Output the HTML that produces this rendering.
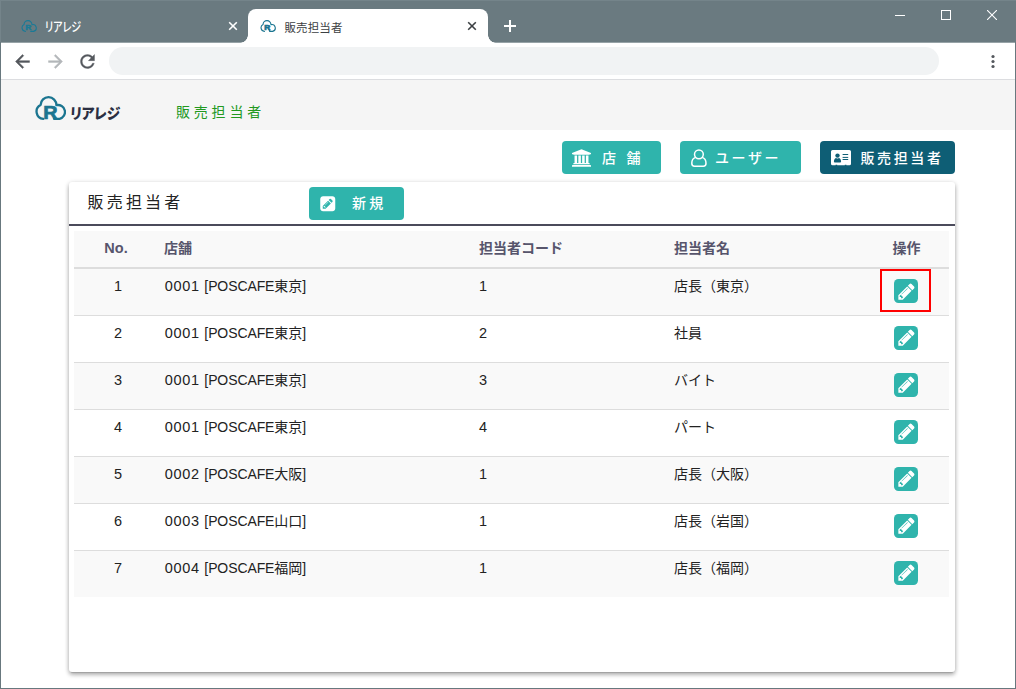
<!DOCTYPE html>
<html lang="ja">
<head>
<meta charset="utf-8">
<title>販売担当者</title>
<style>
*{box-sizing:border-box;margin:0;padding:0}
html,body{width:1016px;height:689px;overflow:hidden;background:#fff}
body{font-family:"Liberation Sans","Noto Sans CJK JP",sans-serif;color:#333;position:relative}
.abs{position:absolute}
#win{position:absolute;left:0;top:0;width:1016px;height:689px;overflow:hidden}
#frame{position:absolute;left:0;top:0;width:1016px;height:689px;border-left:1px solid #68787e;border-right:1px solid #68787e;border-bottom:1px solid #68787e;pointer-events:none}
#titlebar{position:absolute;left:0;top:0;width:1016px;height:42px;background:#6a7a80;z-index:3}
#titlebar svg,#titlebar .tabtxt{z-index:4}
#tab-active{position:absolute;left:248px;top:9px;width:240px;height:34px;z-index:2;background:#fff;border-radius:8px 8px 0 0}
#tab-active:before,#tab-active:after{content:"";position:absolute;bottom:0;width:8px;height:8px;background:radial-gradient(circle at 0 0,rgba(255,255,255,0) 7.5px,#fff 8px)}
#tab-active:before{left:-8px}
#tab-active:after{right:-8px;background:radial-gradient(circle at 100% 0,rgba(255,255,255,0) 7.5px,#fff 8px)}
.tabtxt{position:absolute;font-size:12px;line-height:16px;white-space:nowrap;font-feature-settings:"palt"}
#toolbar{position:absolute;left:0;top:42px;width:1016px;height:38px;border-top:1px solid #97a3a7;background:#fff;border-bottom:1px solid #dcdde0}
#omni{position:absolute;left:109px;top:4px;width:830px;height:28px;border-radius:14px;background:#f1f3f4}
#logotxt{position:absolute;left:70px;top:23px;font-family:"Noto Sans CJK JP",sans-serif;font-weight:900;font-size:15px;line-height:20px;color:#2b2f42;white-space:nowrap;transform-origin:0 50%;transform:skewX(-3deg) scaleX(.9);font-feature-settings:"palt"}
#pagehead{position:absolute;left:0;top:80px;width:1016px;height:50px;background:#f5f5f5}
#pagetitle{position:absolute;left:176px;top:103px;font-size:14px;line-height:18px;letter-spacing:3.8px;color:#22991f;white-space:nowrap}
.btn{position:absolute;top:141px;height:33px;border-radius:4px;background:#2fb4ac;color:#fff;font-size:14px;font-weight:500;line-height:34px;white-space:nowrap}
#card{position:absolute;left:69px;top:182px;width:886px;height:490px;background:#fff;border-radius:3px;box-shadow:0 3px 4px 0 rgba(0,0,0,.22),0 3px 1px -2px rgba(0,0,0,.12),0 1px 5px 0 rgba(0,0,0,.2)}
#cardtitle{position:absolute;left:18.5px;top:10px;font-size:16px;line-height:22px;letter-spacing:3.2px;color:#222;white-space:nowrap}
#cardline{position:absolute;left:0;top:42px;width:886px;height:2px;background:#4b4b5b}
#newbtn{position:absolute;left:240px;top:5px;width:95px;height:33px;border-radius:4px;background:#2fb4ac;color:#fff;font-size:14px;font-weight:500;line-height:33px;white-space:nowrap}
table{position:absolute;left:5px;top:49px;width:875px;border-collapse:collapse;font-size:14px;color:#222}
th{height:37px;background:#f9f9f9;border-bottom:2px solid #ddd;font-weight:bold;color:#57556c;text-align:left;padding:7px 0 0 0;vertical-align:top;line-height:20px}
td{height:47px;border-top:1px solid #ddd;padding:7px 0 0 0;vertical-align:top;line-height:20px}
tr.odd td{background:#f9f9f9}
.la{font-size:14px;letter-spacing:-.1px}
.dg{font-size:14.5px;letter-spacing:.65px;margin-left:.8px}
td.c1,td.c3{font-size:14.5px}
td.c1{padding-left:4px}
th.c1{font-size:14.5px}
.c1{width:90px;text-align:center !important;padding-right:6px !important}
.c2{width:315px}
.c3{width:195px}
.c4{width:206px}
.c5{text-align:left !important}
th.c5{padding-left:12.5px}
.eb{display:block;width:24px;height:24px;border-radius:4.5px;background:#2fb4ac;position:relative;top:3px;left:14px}
.eb svg{position:absolute;left:2.5px;top:2.5px}
</style>
</head>
<body>
<div id="win">
<div id="titlebar">
  <svg class="abs" style="left:21px;top:20px" width="16" height="12" viewBox="0 0 31 24"><path fill="none" stroke-linecap="round" stroke-linejoin="round" d="M8.3 22.8A7.3 7.3 0 0 1 5.6 9A7.7 7.7 0 0 1 21.4 9.2A6 6 0 0 1 24.6 22.8H19" stroke="#1a7a96" stroke-width="2.2"/><text transform="translate(7.8 19.2) scale(1.25 1)" font-family="Liberation Sans, sans-serif" font-weight="bold" font-size="13.5" fill="#1a7a96" stroke="#1a7a96" stroke-width=".9">R</text></svg>
  <div class="tabtxt" style="left:45px;top:18.5px;color:#fff;font-size:13px;font-weight:500;transform-origin:0 50%;transform:scaleX(.77)">リアレジ</div>
  <svg class="abs" style="left:228px;top:21px" width="10" height="10" viewBox="0 0 10 10"><path d="M1.2 1.2 8.8 8.8M8.8 1.2 1.2 8.8" stroke="#fff" stroke-width="1.6" fill="none"/></svg>
  <div id="tab-active"></div>
  <svg class="abs" style="left:260px;top:20px" width="16" height="12" viewBox="0 0 31 24"><path fill="none" stroke-linecap="round" stroke-linejoin="round" d="M8.3 22.8A7.3 7.3 0 0 1 5.6 9A7.7 7.7 0 0 1 21.4 9.2A6 6 0 0 1 24.6 22.8H19" stroke="#1b7590" stroke-width="2.2"/><path d="M19.5 22.8L17 18.5" stroke="#1b7590" stroke-width="2.4" fill="none"/><text transform="translate(7.8 19.2) scale(1.25 1)" font-family="Liberation Sans, sans-serif" font-weight="bold" font-size="13.5" fill="#1b7590" stroke="#1b7590" stroke-width="1.2">R</text></svg>
  <div class="tabtxt" style="left:284.5px;top:19.5px;color:#3c4043;font-size:11.5px;letter-spacing:.1px;font-feature-settings:normal">販売担当者</div>
  <svg class="abs" style="left:467px;top:21px" width="10" height="10" viewBox="0 0 10 10"><path d="M1.2 1.2 8.8 8.8M8.8 1.2 1.2 8.8" stroke="#3c4043" stroke-width="1.6" fill="none"/></svg>
  <svg class="abs" style="left:503px;top:19px" width="14" height="14" viewBox="0 0 14 14"><path d="M7 1V13M1 7H13" stroke="#fff" stroke-width="2" fill="none"/></svg>
  <div class="abs" style="left:895px;top:15px;width:10px;height:1px;background:#fff"></div>
  <div class="abs" style="left:941px;top:10px;width:10px;height:10px;border:1px solid #fff"></div>
  <svg class="abs" style="left:987px;top:10px" width="10" height="10" viewBox="0 0 10 10"><path d="M0 0 10 10M10 0 0 10" stroke="#fff" stroke-width="1.1" fill="none"/></svg>
</div>
<div id="toolbar">
  <svg class="abs" style="left:12px;top:7.5px" width="21" height="21" viewBox="0 0 24 24"><path fill="#54585d" stroke="#54585d" stroke-width=".5" d="M20 11H7.83l5.59-5.59L12 4l-8 8 8 8 1.41-1.41L7.83 13H20v-2z"/></svg>
  <svg class="abs" style="left:44.7px;top:7.5px" width="21" height="21" viewBox="0 0 24 24"><path fill="#b4b7ba" stroke="#b4b7ba" stroke-width=".5" d="M4 11h12.17l-5.59-5.59L12 4l8 8-8 8-1.41-1.41L16.17 13H4v-2z"/></svg>
  <svg class="abs" style="left:76.5px;top:7.5px" width="21" height="21" viewBox="0 0 24 24"><path fill="#54585d" stroke="#54585d" stroke-width=".4" d="M17.65 6.35C16.2 4.9 14.21 4 12 4c-4.42 0-7.99 3.58-7.99 8s3.57 8 7.99 8c3.73 0 6.84-2.55 7.73-6h-2.08c-.82 2.33-3.04 4-5.65 4-3.31 0-6-2.69-6-6s2.69-6 6-6c1.66 0 3.14.69 4.22 1.78L13 11h7V4l-2.35 2.35z"/></svg>
  <div id="omni"></div>
  <svg class="abs" style="left:990.4px;top:11px" width="6" height="16" viewBox="0 0 6 16"><circle cx="3" cy="2.5" r="1.6" fill="#54585d"/><circle cx="3" cy="7.5" r="1.6" fill="#54585d"/><circle cx="3" cy="12.5" r="1.6" fill="#54585d"/></svg>
</div>
<div id="pagehead">
  <svg class="abs" style="left:35px;top:16px" width="31" height="24" viewBox="0 0 31 24"><path fill="none" stroke-linecap="round" stroke-linejoin="round" d="M8.3 22.8A7.3 7.3 0 0 1 5.6 9A7.7 7.7 0 0 1 21.4 9.2A6 6 0 0 1 24.6 22.8H19" stroke="#1b7590" stroke-width="2.3"/><text transform="translate(8.3 23.4) scale(1.13 1)" font-family="Liberation Sans, sans-serif" font-weight="bold" font-size="17.5" fill="#1b7590" stroke="#1b7590" stroke-width=".7">R</text></svg>
  <div id="logotxt">リアレジ</div>
</div>
<div id="pagetitle">販売担当者</div>

<div class="btn" style="left:562px;width:99px">
  <svg class="abs" style="left:10px;top:8px" width="19" height="18" viewBox="0 0 1920 1792"><path fill="#fff" d="M960 0l960 384v128h-128q0 26-20.500 45t-48.500 19h-1526q-28 0-48.500-19t-20.500-45h-128v-128zM256 640h256v768h128v-768h256v768h128v-768h256v768h128v-768h256v768h59q28 0 48.500 19t20.500 45v64h-1664v-64q0-26 20.500-45t48.500-19h59v-768zM1851 1600q28 0 48.500 19t20.500 45v128h-1920v-128q0-26 20.500-45t48.500-19h1782z"/></svg>
  <span class="abs" style="left:40px;top:0">店</span><span class="abs" style="left:64.500px;top:0">舗</span>
</div>
<div class="btn" style="left:680px;width:121px">
  <svg class="abs" style="left:10px;top:7px" width="18" height="20" viewBox="0 0 18 20"><g fill="none" stroke="#fff" stroke-width="1.5"><circle cx="8.9" cy="6.3" r="4.4"/><path d="M5.6 9.4C3 10.2 1.8 12.3 1.8 15.2c0 1.900 1 3 2.700 3h8.800c1.700 0 2.700-1.100 2.700-3 0-2.900-1.200-5-3.800-5.800"/></g></svg>
  <span class="abs" style="left:35px;top:0;letter-spacing:2.6px">ユーザー</span>
</div>
<div class="btn" style="left:820px;width:135px;background:#0e5e75">
  <svg class="abs" style="left:11px;top:9px" width="20" height="16" viewBox="0 0 20 16"><path fill="#fff" d="M1.600 0h16.800a1.600 1.600 0 0 1 1.600 1.600v12.100a1.600 1.600 0 0 1-1.600 1.600h-3v-.6h-1.600v.6h-7.600v-.6h-1.600v.6h-3a1.600 1.600 0 0 1-1.600-1.600v-12.100a1.600 1.600 0 0 1 1.600-1.600z"/><g fill="#0e5e75"><circle cx="6.500" cy="5.600" r="2.200"/><path d="M2.900 11.800c0-2.400 1.200-3.800 2.300-3.800.5.400 1 .5 1.300.5s.8-.1 1.300-.5c1.100 0 2.300 1.400 2.300 3.800 0 .5-.4.800-.9.800h-5.400c-.5 0-.9-.3-.9-.8z"/><rect x="11.600" y="4" width="5.600" height="1"/><rect x="11.600" y="6.900" width="5.600" height="1"/><rect x="11.600" y="9" width="5.600" height="1"/></g></svg>
  <span class="abs" style="left:40.500px;top:0;letter-spacing:2.6px">販売担当者</span>
</div>

<div id="card">
  <div id="cardtitle">販売担当者</div>
  <div id="newbtn"><svg class="abs" style="left:10px;top:8px" width="17.500" height="17.500" viewBox="0 0 1792 1792"><path fill="#fff" d="M532 1108l152 152-52 52h-56v-96h-96v-56zm414-390q14 13-3 30l-291 291q-17 17-30 3-14-13 3-30l291-291q17-17 30-3zm-274 690l544-544-288-288-544 544v288h288zm608-608l92-92q28-28 28-68t-28-68l-152-152q-28-28-68-28t-68 28l-92 92zm384-384v960q0 119-84.500 203.500t-203.500 84.500h-960q-119 0-203.500-84.500t-84.500-203.500v-960q0-119 84.500-203.500t203.500-84.500h960q119 0 203.500 84.500t84.500 203.500z"/></svg><span style="position:absolute;left:43px;letter-spacing:3.2px">新規</span></div>
  <div id="cardline"></div>
  <table>
    <tr><th class="c1">No.</th><th class="c2">店舗</th><th class="c3">担当者コード</th><th class="c4">担当者名</th><th class="c5">操作</th></tr>
    <tr class="odd"><td class="c1">1</td><td><span class="dg">0001 </span><span class="la">[POSCAFE</span>東京<span class="la">]</span></td><td class="c3">1</td><td>店長（東京）</td><td class="c5"><span class="eb"><svg width="19" height="19" viewBox="0 0 1792 1792"><path fill="#fff" d="M491 1536l91-91-235-235-91 91v107h128v128h107zm523-928q0-22-22-22-10 0-17 7l-542 542q-7 7-7 17 0 22 22 22 10 0 17-7l542-542q7-7 7-17zm-54-192l416 416-832 832h-416v-416zm683 96q0 53-37 90l-166 166-416-416 166-165q36-38 90-38 53 0 91 38l235 234q37 39 37 91z"/></svg></span></td></tr>
    <tr><td class="c1">2</td><td><span class="dg">0001 </span><span class="la">[POSCAFE</span>東京<span class="la">]</span></td><td class="c3">2</td><td>社員</td><td class="c5"><span class="eb"><svg width="19" height="19" viewBox="0 0 1792 1792"><path fill="#fff" d="M491 1536l91-91-235-235-91 91v107h128v128h107zm523-928q0-22-22-22-10 0-17 7l-542 542q-7 7-7 17 0 22 22 22 10 0 17-7l542-542q7-7 7-17zm-54-192l416 416-832 832h-416v-416zm683 96q0 53-37 90l-166 166-416-416 166-165q36-38 90-38 53 0 91 38l235 234q37 39 37 91z"/></svg></span></td></tr>
    <tr class="odd"><td class="c1">3</td><td><span class="dg">0001 </span><span class="la">[POSCAFE</span>東京<span class="la">]</span></td><td class="c3">3</td><td>バイト</td><td class="c5"><span class="eb"><svg width="19" height="19" viewBox="0 0 1792 1792"><path fill="#fff" d="M491 1536l91-91-235-235-91 91v107h128v128h107zm523-928q0-22-22-22-10 0-17 7l-542 542q-7 7-7 17 0 22 22 22 10 0 17-7l542-542q7-7 7-17zm-54-192l416 416-832 832h-416v-416zm683 96q0 53-37 90l-166 166-416-416 166-165q36-38 90-38 53 0 91 38l235 234q37 39 37 91z"/></svg></span></td></tr>
    <tr><td class="c1">4</td><td><span class="dg">0001 </span><span class="la">[POSCAFE</span>東京<span class="la">]</span></td><td class="c3">4</td><td>パート</td><td class="c5"><span class="eb"><svg width="19" height="19" viewBox="0 0 1792 1792"><path fill="#fff" d="M491 1536l91-91-235-235-91 91v107h128v128h107zm523-928q0-22-22-22-10 0-17 7l-542 542q-7 7-7 17 0 22 22 22 10 0 17-7l542-542q7-7 7-17zm-54-192l416 416-832 832h-416v-416zm683 96q0 53-37 90l-166 166-416-416 166-165q36-38 90-38 53 0 91 38l235 234q37 39 37 91z"/></svg></span></td></tr>
    <tr class="odd"><td class="c1">5</td><td><span class="dg">0002 </span><span class="la">[POSCAFE</span>大阪<span class="la">]</span></td><td class="c3">1</td><td>店長（大阪）</td><td class="c5"><span class="eb"><svg width="19" height="19" viewBox="0 0 1792 1792"><path fill="#fff" d="M491 1536l91-91-235-235-91 91v107h128v128h107zm523-928q0-22-22-22-10 0-17 7l-542 542q-7 7-7 17 0 22 22 22 10 0 17-7l542-542q7-7 7-17zm-54-192l416 416-832 832h-416v-416zm683 96q0 53-37 90l-166 166-416-416 166-165q36-38 90-38 53 0 91 38l235 234q37 39 37 91z"/></svg></span></td></tr>
    <tr><td class="c1">6</td><td><span class="dg">0003 </span><span class="la">[POSCAFE</span>山口<span class="la">]</span></td><td class="c3">1</td><td>店長（岩国）</td><td class="c5"><span class="eb"><svg width="19" height="19" viewBox="0 0 1792 1792"><path fill="#fff" d="M491 1536l91-91-235-235-91 91v107h128v128h107zm523-928q0-22-22-22-10 0-17 7l-542 542q-7 7-7 17 0 22 22 22 10 0 17-7l542-542q7-7 7-17zm-54-192l416 416-832 832h-416v-416zm683 96q0 53-37 90l-166 166-416-416 166-165q36-38 90-38 53 0 91 38l235 234q37 39 37 91z"/></svg></span></td></tr>
    <tr class="odd"><td class="c1">7</td><td><span class="dg">0004 </span><span class="la">[POSCAFE</span>福岡<span class="la">]</span></td><td class="c3">1</td><td>店長（福岡）</td><td class="c5"><span class="eb"><svg width="19" height="19" viewBox="0 0 1792 1792"><path fill="#fff" d="M491 1536l91-91-235-235-91 91v107h128v128h107zm523-928q0-22-22-22-10 0-17 7l-542 542q-7 7-7 17 0 22 22 22 10 0 17-7l542-542q7-7 7-17zm-54-192l416 416-832 832h-416v-416zm683 96q0 53-37 90l-166 166-416-416 166-165q36-38 90-38 53 0 91 38l235 234q37 39 37 91z"/></svg></span></td></tr>
  </table>
</div>
<div class="abs" style="left:880px;top:269px;width:51px;height:43px;border:2px solid #f00"></div>
<div id="frame"></div><div class="abs" style="left:0;top:0;width:1016px;height:1px;background:#74848a;z-index:9"></div><div class="abs" style="left:0;top:0;width:1px;height:42px;background:#74848a;z-index:9"></div>
</div>
</body>
</html>
